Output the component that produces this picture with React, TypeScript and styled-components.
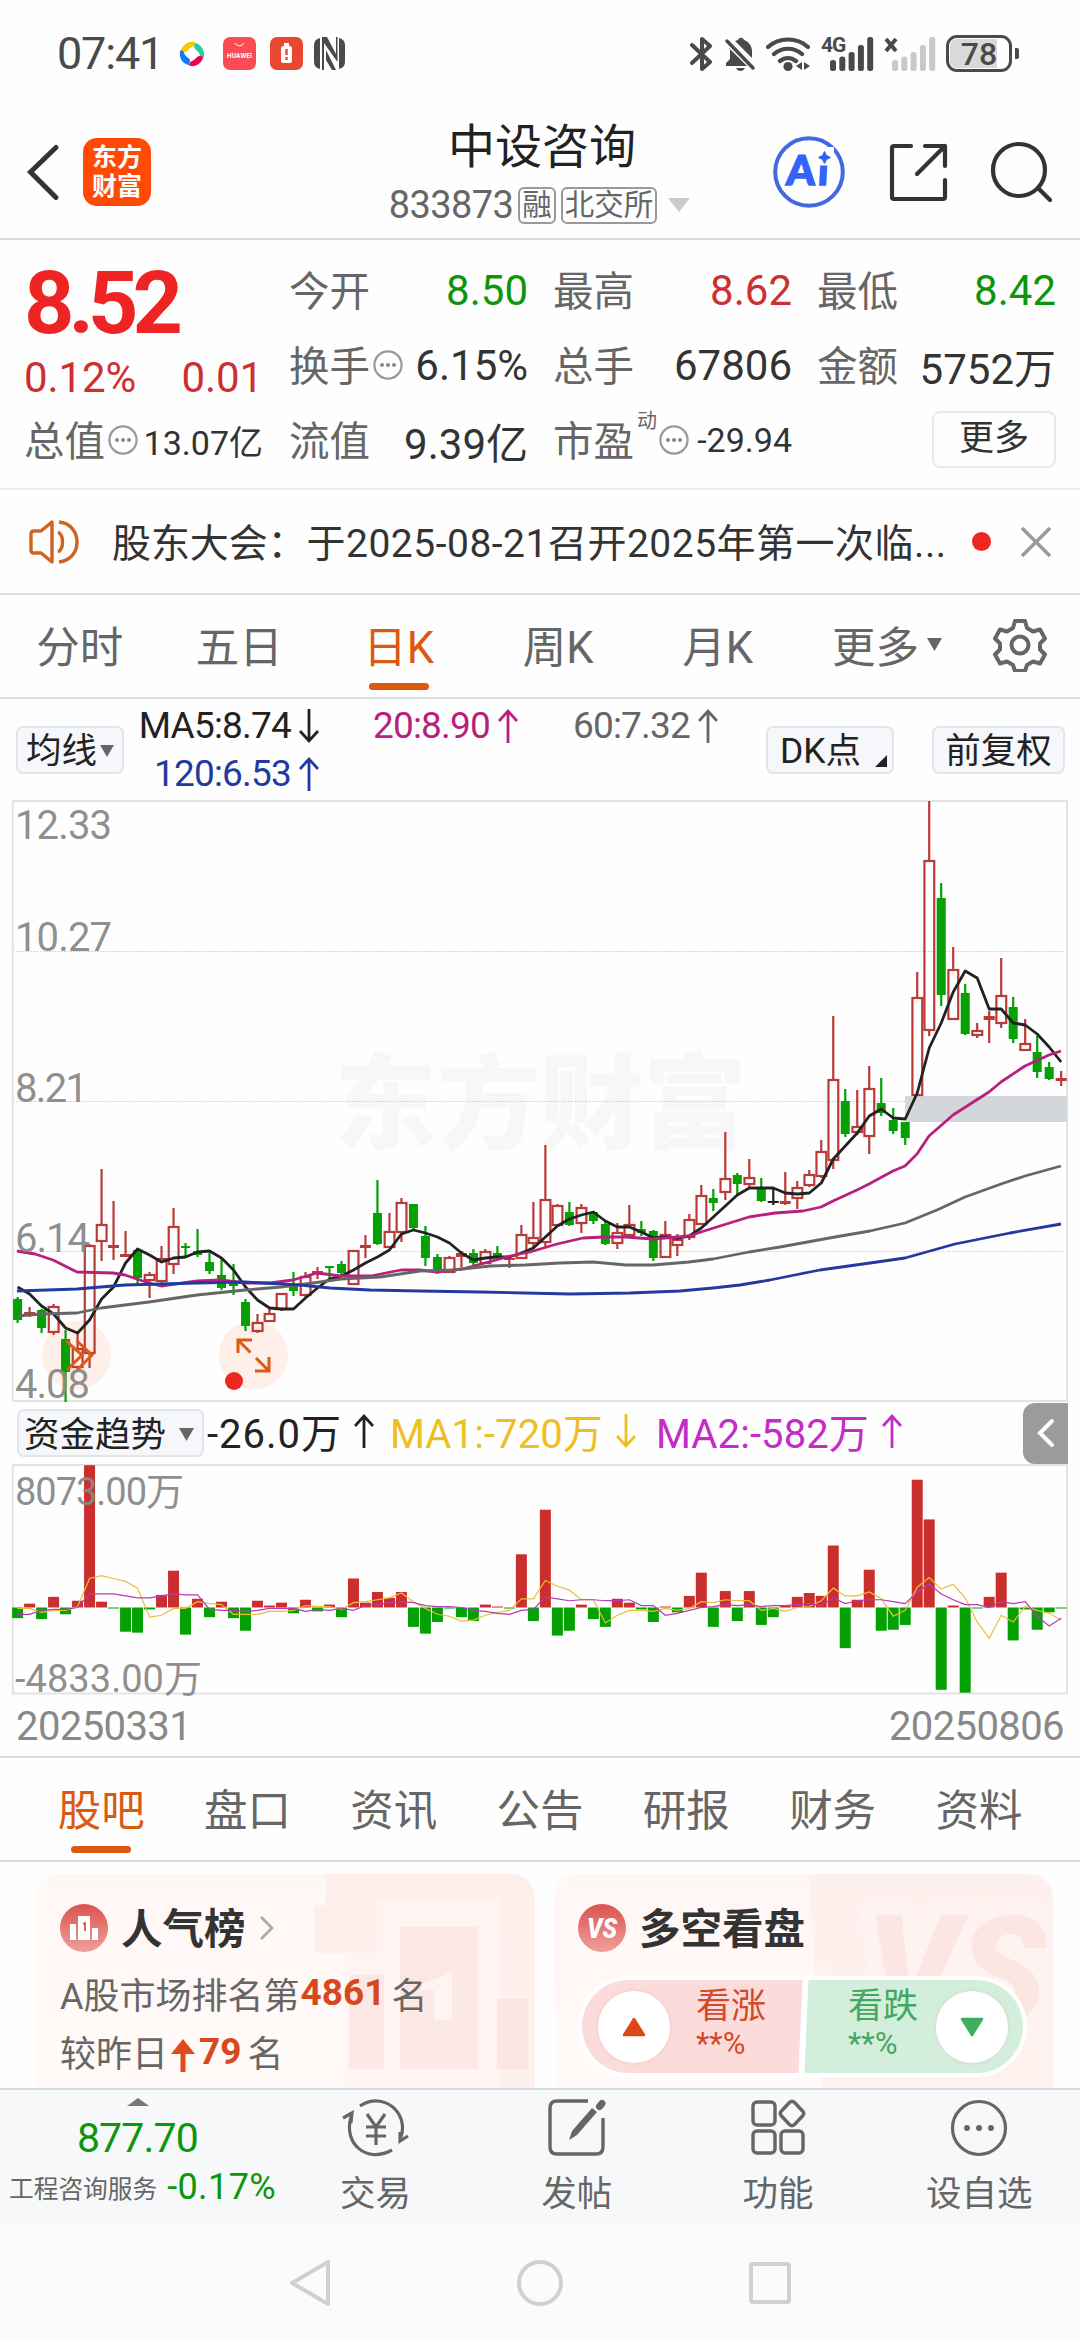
import React from 'react';
import styled, { createGlobalStyle } from 'styled-components';

type Candle = [string, number, number, number, number];

// kind (r = up, g = down, k = flat), high, body top, body bottom, low
const CANDLES: Candle[] = [
  ['g', 1297, 1299, 1320, 1323], ['r', 1307, 1312, 1315, 1317], ['g', 1309, 1310, 1328, 1333], ['r', 1304, 1306, 1332, 1335],
  ['g', 1330, 1339, 1372, 1402], ['r', 1333, 1348, 1367, 1370], ['r', 1244, 1245, 1353, 1368], ['r', 1169, 1224, 1241, 1261],
  ['r', 1201, 1245, 1248, 1260], ['r', 1231, 1254, 1257, 1257], ['g', 1250, 1250, 1278, 1285], ['r', 1272, 1274, 1280, 1298],
  ['r', 1246, 1258, 1281, 1285], ['r', 1208, 1226, 1264, 1274], ['g', 1243, 1246, 1248, 1256], ['g', 1229, 1251, 1255, 1257],
  ['g', 1253, 1262, 1271, 1274], ['g', 1259, 1275, 1288, 1290], ['g', 1264, 1283, 1286, 1295], ['g', 1299, 1302, 1326, 1331],
  ['r', 1314, 1322, 1331, 1333], ['r', 1308, 1313, 1321, 1322], ['r', 1293, 1293, 1309, 1311], ['g', 1272, 1286, 1291, 1296],
  ['r', 1272, 1276, 1295, 1298], ['r', 1267, 1271, 1274, 1279], ['g', 1266, 1266, 1268, 1279], ['g', 1261, 1264, 1273, 1275],
  ['r', 1250, 1250, 1284, 1285], ['r', 1235, 1245, 1248, 1258], ['g', 1180, 1213, 1244, 1245], ['r', 1213, 1231, 1247, 1248],
  ['r', 1198, 1202, 1232, 1242], ['g', 1204, 1204, 1228, 1229], ['g', 1226, 1236, 1258, 1266], ['g', 1254, 1257, 1269, 1274],
  ['r', 1256, 1257, 1272, 1273], ['r', 1251, 1253, 1257, 1267], ['g', 1249, 1253, 1263, 1265], ['r', 1249, 1251, 1263, 1264],
  ['g', 1246, 1253, 1258, 1260], ['r', 1257, 1258, 1260, 1268], ['r', 1225, 1234, 1258, 1259], ['r', 1202, 1237, 1243, 1247],
  ['r', 1145, 1199, 1242, 1247], ['r', 1204, 1205, 1225, 1227], ['g', 1202, 1212, 1225, 1226], ['r', 1204, 1207, 1223, 1233],
  ['g', 1211, 1212, 1221, 1224], ['g', 1222, 1224, 1244, 1245], ['r', 1223, 1232, 1243, 1249], ['r', 1205, 1224, 1235, 1238],
  ['g', 1221, 1229, 1233, 1236], ['g', 1230, 1231, 1258, 1261], ['r', 1221, 1234, 1257, 1258], ['r', 1234, 1239, 1245, 1256],
  ['r', 1214, 1219, 1237, 1240], ['r', 1185, 1195, 1224, 1225], ['g', 1189, 1198, 1203, 1211], ['r', 1132, 1178, 1192, 1200],
  ['g', 1173, 1175, 1184, 1195], ['r', 1159, 1177, 1184, 1187], ['g', 1178, 1187, 1201, 1202], ['k', 1188, 1201, 1203, 1205],
  ['r', 1172, 1201, 1204, 1205], ['r', 1181, 1187, 1198, 1209], ['r', 1170, 1174, 1185, 1187], ['r', 1140, 1151, 1176, 1178],
  ['r', 1016, 1079, 1160, 1169], ['g', 1089, 1101, 1134, 1137], ['r', 1090, 1126, 1132, 1135], ['r', 1066, 1088, 1136, 1154],
  ['g', 1078, 1103, 1113, 1116], ['g', 1108, 1120, 1131, 1134], ['g', 1122, 1122, 1138, 1145], ['r', 972, 997, 1095, 1096],
  ['r', 801, 860, 1030, 1036], ['g', 883, 898, 995, 1006], ['r', 947, 969, 1019, 1019], ['g', 984, 993, 1034, 1035],
  ['r', 1023, 1030, 1035, 1038], ['r', 1011, 1016, 1020, 1043], ['r', 958, 995, 1023, 1028], ['g', 997, 1007, 1039, 1043],
  ['r', 1019, 1043, 1050, 1051], ['g', 1036, 1052, 1072, 1078], ['g', 1062, 1067, 1079, 1080], ['r', 1071, 1078, 1081, 1086],
];

const MA5 = [
  1287, 1294, 1306, 1314, 1328, 1333, 1320, 1299, 1287, 1263, 1249, 1255, 1262, 1258, 1257, 1252, 1251, 1258, 1270, 1287,
  1300, 1308, 1309, 1309, 1298, 1288, 1279, 1276, 1270, 1263, 1257, 1250, 1234, 1230, 1233, 1237, 1243, 1253, 1260, 1258,
  1257, 1257, 1253, 1248, 1237, 1226, 1219, 1215, 1212, 1221, 1227, 1227, 1232, 1238, 1237, 1238, 1236, 1228, 1217, 1206,
  1195, 1188, 1188, 1188, 1193, 1194, 1193, 1183, 1159, 1146, 1133, 1116, 1109, 1118, 1119, 1093, 1048, 1023, 992, 971,
  978, 1009, 1009, 1023, 1025, 1034, 1047, 1062,
];

const MA20 = '17,1251 35,1254 53,1260 77,1272 113,1273 125,1275 149,1283 161,1286 197,1281 221,1280 245,1283 270,1283 293,1280 317,1273 341,1276 371,1276 401,1270 420,1270 437,1272 462,1269 485,1263 510,1256 530,1252 557,1244 583,1238 605,1237 625,1237 653,1239 689,1236 701,1232 720,1226 749,1217 775,1213 803,1211 821,1207 833,1201 857,1190 869,1184 893,1171 905,1166 917,1154 929,1136 953,1115 989,1092 1001,1082 1025,1066 1049,1055 1061,1051';
const MA60 = '17,1316 41,1314 77,1313 101,1308 149,1302 197,1295 245,1290 281,1287 313,1283 341,1279 380,1277 420,1271 453,1270 490,1266 525,1265 560,1263 593,1262 626,1265 653,1265 689,1262 713,1259 749,1252 780,1247 835,1237 870,1231 905,1223 937,1210 965,1197 1001,1184 1025,1176 1061,1166';
const MA120 = '17,1291 77,1289 125,1285 197,1283 245,1282 300,1285 330,1288 370,1290 420,1291 480,1292 525,1293 570,1294 630,1293 680,1291 713,1288 740,1285 770,1280 820,1270 870,1263 905,1258 955,1244 1010,1233 1061,1224';

const FLOW = [
  -11, 4, -12, 11, -7, 7, 147, 6, -1, -25, -26, -2, 13, 38, -28, 9, -10, 6, -11, -24, 7, 2, 5, -6, 8, -4, 3, -10, 30, 5,
  16, 10, 16, -20, -27, -15, -1, -10, -14, 3, 1, -1, 55, -14, 101, -29, -24, 3, -12, -20, 9, 5, -2, -15, 1, -5, 12, 36,
  -20, 17, -14, 17, -18, -10, 2, 11, 15, 12, 64, -42, 8, 39, -24, -23, -18, 132, 91, -85, 2, -88, -1, 11, 36, -34, -2,
  -23, -5, -1,
];
const FLOW_MA1 = [
  -1, -1, -5, -3, -3, 1, 30, 33, 30, 27, 20, -10, -8, -1, -1, 6, 4, 3, -7, -7, -7, -4, -4, -3, 2, 1, 1, -2, 5, 6, 8, 10,
  15, 6, -1, -7, -9, -14, -13, -8, -5, -3, 9, 9, 28, 22, 18, 8, 8, -16, -8, -3, -3, -4, -1, -3, -1, 6, 5, 8, 7, 7, -3, -1,
  -4, 0, 1, 7, 20, 12, 12, 16, 9, -9, -3, 21, 31, 19, 24, 10, -15, -32, -8, -15, 1, -3, -6, -13,
];
const FLOW_MA2 = [
  -7, -7, -3, -2, -2, 0, 14, 14, 14, 12, 10, 10, 12, 14, 13, 13, -2, -3, -3, -4, -3, -1, -1, -1, -4, -2, -3, -1, -3, 2, 3,
  5, 6, 5, 2, 1, 1, 0, -3, -4, -6, -7, -3, -2, 11, 9, 7, 8, 8, 7, 7, 8, 2, 2, -8, -6, -3, 0, 1, 3, 2, 3, 1, 2, 2, 3, 4, 2,
  10, 4, 7, 8, 8, 6, 4, 16, 24, 14, 8, 3, 3, 0, 6, 4, 6, -9, -19, -11,
];

const FLOW_ZERO = 1607.5;
const FLOW_SCALE = 0.968;
const COLORS: Record<string, string> = { r: '#b93a37', g: '#04a004', k: '#222' };

const cx = (i: number) => 17.6 + i * 11.995;
const flowLine = (values: number[]) => values.map((v, i) => `${cx(i)},${FLOW_ZERO - v * FLOW_SCALE}`).join(' ');

const Arrow = ({ up }: { up?: boolean }) => (
  <ArrowSvg width="20" height="36" viewBox="0 0 20 36" fill="none" stroke="currentColor" strokeWidth="2.8">
    {up ? <path d="M10 35V3M1 13l9-10 9 10" /> : <path d="M10 1v32M1 23l9 10 9-10" />}
  </ArrowSvg>
);

const Info = () => (
  <svg width="30" height="30" viewBox="0 0 30 30">
    <circle cx="15" cy="15" r="13.6" fill="none" stroke="#999" strokeWidth="2.2" />
    <circle cx="9" cy="15" r="2" fill="#888" />
    <circle cx="15" cy="15" r="2" fill="#888" />
    <circle cx="21" cy="15" r="2" fill="#888" />
  </svg>
);

const Swirl = () => (
  <svg width="26" height="26" viewBox="0 0 26 26">
    <path d="M2 9C5 3 9 0 16 1c1 2-1 4-3 5-3 1-4 5-7 5C4 12 2 11 2 9z" fill="#fdc800" />
    <path d="M17 2c5 2 9 7 8 14-3 2-4-1-5-4-1-2-5-4-5-7 0-1 1-3 2-3z" fill="#25cf9f" />
    <path d="M24 17c-2 5-6 9-13 8-2-1 0-4 2-5 3-1 4-4 7-5 2 0 4 0 4 2z" fill="#f2004f" />
    <path d="M9 24C3 22 0 17 1 10c2-2 4 1 5 4 1 2 5 3 5 6 0 2-1 4-2 4z" fill="#0d7df5" />
  </svg>
);

const SignalBars = ({ color }: { color: string }) => (
  <svg width="44" height="34" viewBox="0 0 44 34" fill={color}>
    <rect x="0" y="23" width="6" height="11" rx="2.5" />
    <rect x="9.3" y="19.5" width="6" height="14.5" rx="2.5" />
    <rect x="18.6" y="15" width="6" height="19" rx="2.5" />
    <rect x="27.9" y="8" width="6" height="26" rx="2.5" />
    <rect x="37.2" y="0" width="6" height="34" rx="2.5" />
  </svg>
);

const KChart = () => (
  <ChartSvg width="1080" height="602" viewBox="0 800 1080 602">
    <text x="334" y="1141" fontSize="103" fontWeight="900" fill="#f7f7f7">东方财富</text>
    <g stroke="#ccc" strokeWidth="1" strokeDasharray="1.5 1.5">
      <path d="M13 951.5H1066M13 1101.5H1066M13 1251.5H1066" />
    </g>
    <rect x="12.7" y="801" width="1054.3" height="600" fill="none" stroke="#e3e3e3" strokeWidth="2" />
    <rect x="905" y="1096" width="162" height="26" fill="#d3d6db" />
    <circle cx="76.5" cy="1355" r="34.5" fill="#feefe8" />
    <circle cx="253.5" cy="1355" r="34.5" fill="#feefe8" />
    {CANDLES.map(([kind, high, top, bottom, low], i) => {
      const color = COLORS[kind];
      const x = cx(i);
      const hollow = kind === 'r' && bottom - top > 4;
      return (
        <g key={i} stroke={color} strokeWidth="2.2" fill={color}>
          <path d={`M${x} ${high}V${top}M${x} ${bottom}V${low}`} />
          {hollow ? (
            <rect x={x - 4.8} y={top + 1} width="9.8" height={bottom - top - 1} fill="none" />
          ) : (
            <rect x={x - (kind === 'g' ? 4.5 : 5.5)} y={top} width={kind === 'g' ? 9 : 11} height={Math.max(bottom - top, 2)} stroke="none" />
          )}
        </g>
      );
    })}
    <g fill="none" strokeWidth="2.8" strokeLinejoin="round">
      <polyline points={MA5.map((y, i) => `${cx(i)},${y}`).join(' ')} stroke="#222" />
      <polyline points={MA20} stroke="#b91f7c" />
      <polyline points={MA60} stroke="#666" />
      <polyline points={MA120} stroke="#2339a0" />
    </g>
    <g fill="none" stroke="#d95b15" strokeWidth="3">
      <path d="M66 1341l16 14-15 15M77 1341l15 14-15 15" />
      <path d="M238 1353v-13h14M238 1340l12.5 12.5M255 1371h14v-14M269 1371l-13-13" />
    </g>
    <circle cx="234" cy="1381" r="9" fill="#ee2722" />
    <g fontSize="40" fill="#888" fillOpacity="0.95">
      <text x="15" y="839" textLength="97">12.33</text>
      <text x="15" y="951" textLength="97">10.27</text>
      <text x="15" y="1102" textLength="73">8.21</text>
      <text x="15" y="1252" textLength="75">6.14</text>
      <text x="15" y="1398" textLength="75">4.08</text>
    </g>
  </ChartSvg>
);

const FlowChart = () => (
  <ChartSvg width="1080" height="231" viewBox="0 1464 1080 231">
    <rect x="12.7" y="1465" width="1054.3" height="228.5" fill="none" stroke="#e3e3e3" strokeWidth="2" />
    {FLOW.map((v, i) => {
      const h = Math.max(Math.abs(v) * FLOW_SCALE, 1);
      return <rect key={i} x={cx(i) - 5.5} y={v > 0 ? FLOW_ZERO - h : FLOW_ZERO} width="11" height={h} fill={v > 0 ? '#cb2f2d' : '#04a004'} />;
    })}
    <polyline points={flowLine(FLOW_MA1)} fill="none" stroke="#e9bd3a" strokeWidth="1.2" />
    <polyline points={flowLine(FLOW_MA2)} fill="none" stroke="#b73ab7" strokeWidth="1.2" />
    <g fontSize="38" fill="#888" fillOpacity="0.95">
      <text x="15" y="1505" textLength="169">8073.00万</text>
      <text x="15" y="1692" textLength="187">-4833.00万</text>
    </g>
  </ChartSvg>
);

const PERIODS = ['分时', '五日', '日K', '周K', '月K'];
const SECTIONS = ['股吧', '盘口', '资讯', '公告', '研报', '财务', '资料'];

export default function App() {
  return (
    <Page>
      <GlobalStyle />
      <StatusBar>
        <Clock>07:41</Clock>
        <Spot $left={20}><Swirl /></Spot>
        <Spot $left={18}>
          <svg width="33" height="33" viewBox="0 0 33 33">
            <rect width="33" height="33" rx="7" fill="#fb4b55" />
            <path d="M12 6a5 5 0 0 0 9 0" fill="none" stroke="#fff" />
            <text x="4" y="21" fontSize="6.5" fontWeight="700" fill="#fff" textLength="25">HUAWEI</text>
          </svg>
        </Spot>
        <Spot $left={14}>
          <svg width="33" height="33" viewBox="0 0 33 33">
            <rect width="33" height="33" rx="7" fill="#e8482f" />
            <rect x="11" y="9" width="11" height="17" rx="2.5" fill="#fff" />
            <rect x="14" y="6" width="5" height="3" fill="#fff" />
            <path d="M16.5 12v6M16.500 20v3" stroke="#e8482f" strokeWidth="2.4" />
          </svg>
        </Spot>
        <Spot $left={11}>
          <svg width="31" height="33" viewBox="0 0 31 33" fill="#4a4a4a">
            <path d="M6 1C2 2 0 4 0 9v15c0 5 2 7 6 8zM25 1c4 1 6 3 6 8v15c0 5-2 7-6 8z" />
            <path d="M8 0h5l9 17V0h1.500v25L10 6v27H8zM12 13l10 20h-4l-6-10z" />
          </svg>
        </Spot>
        <Spacer />
        <svg width="24" height="36" viewBox="0 0 24 36" fill="none" stroke="#4a4a4a" strokeWidth="4" strokeLinejoin="round" strokeLinecap="round">
          <path d="M2 9l18 17-8 7V3l8 7L2 27" />
        </svg>
        <Spot $left={10}>
          <svg width="32" height="36" viewBox="0 0 32 36">
            <path d="M11 5l3-1c1-3 5-3 6 0 5 2 8 6 8 11v7zM5 12l18 18H2v-3l4-4V12zM12 32h9c-2 4-7 4-9 0z" fill="#4a4a4a" />
            <path d="M3 5l26 27" stroke="#4a4a4a" strokeWidth="3.5" strokeLinecap="round" />
          </svg>
        </Spot>
        <Spot $left={10}>
          <svg width="44" height="36" viewBox="0 0 44 36" fill="none" stroke="#4a4a4a" strokeWidth="4.2" strokeLinecap="round">
            <path d="M2 11c11-10 29-10 40 0M8 18c8-7 20-7 28 0M14 25c5-4 11-4 16 0" />
            <circle cx="22" cy="30.5" r="4.6" fill="#4a4a4a" stroke="none" />
            <path d="M36 26v8l-6-4zM38 26v8l6-4z" fill="#4a4a4a" stroke="none" />
          </svg>
        </Spot>
        <Signal $left={20}>
          <SignalTag>4G</SignalTag>
          <SignalBars color="#4a4a4a" />
        </Signal>
        <Signal $left={18}>
          <SignalCross width="14" height="16" viewBox="0 0 14 16"><path d="M2 2l10 12M12 2L2 14" stroke="#4a4a4a" strokeWidth="4" /></SignalCross>
          <SignalBars color="#c9c9c9" />
        </Signal>
        <Battery><BatteryFill />78</Battery>
        <BatteryTip />
      </StatusBar>

      <Header>
        <svg width="36" height="60" viewBox="0 0 36 60" fill="none" stroke="#333" strokeWidth="5" strokeLinecap="round">
          <path d="M31 5.5L5.500 30 31 55.500" />
        </svg>
        <Logo><span>东方</span><span>财富</span></Logo>
        <TitleBlock>
          <Title>中设咨询</Title>
          <SubTitle>
            <Code>833873</Code>
            <Tag>融</Tag>
            <Tag>北交所</Tag>
            <svg width="22" height="14" viewBox="0 0 22 14"><path d="M0 0h22L11 14z" fill="#ccc" /></svg>
          </SubTitle>
        </TitleBlock>
        <HeaderIcons>
          <svg width="74" height="74" viewBox="0 0 74 74">
            <circle cx="37" cy="37" r="33.8" fill="none" stroke="#4169e1" strokeWidth="4" />
            <text x="13.5" y="50" fontSize="41" fontWeight="900" fill="#3563f8" stroke="#3563f8" strokeWidth="1.4" fontFamily="Lato" transform="skewX(-3) translate(3 0)" textLength="42">Ai</text>
            <path d="M44 12h18v18.5H44z" fill="#fff" />
            <path d="M52.5 16.500l2 4 4 2-4 2-2 4-2-4-4-2 4-2z" fill="#3563f8" stroke="#3563f8" strokeLinejoin="round" />
          </svg>
          <svg width="60" height="60" viewBox="0 0 60 60" fill="none" stroke="#333" strokeWidth="4.2" strokeLinecap="round" strokeLinejoin="round">
            <path d="M23 4H6q-2 0-2 2v49q0 2 2 2h49q2 0 2-2V38M37 4h20v20M57 4L29 32" />
          </svg>
          <svg width="62" height="62" viewBox="0 0 62 62" fill="none" stroke="#333" strokeWidth="4.2" strokeLinecap="round">
            <circle cx="29" cy="29" r="26" />
            <path d="M49 48l11 11" />
          </svg>
        </HeaderIcons>
      </Header>

      <Quote>
        <PriceBlock>
          <Price>8.52</Price>
          <Change><span>0.12%</span><span>0.01</span></Change>
          <Cell><Label>总值</Label><Info /><Value $small>13.07亿</Value></Cell>
        </PriceBlock>
        <QuoteGrid>
          <Cell><Label>今开</Label><Value $color="#0c960c">8.50</Value></Cell>
          <Cell><Label>最高</Label><Value $color="#cc3030">8.62</Value></Cell>
          <Cell><Label>最低</Label><Value $color="#0c960c">8.42</Value></Cell>
          <Cell><Label>换手</Label><Info /><Value>6.15%</Value></Cell>
          <Cell><Label>总手</Label><Value>67806</Value></Cell>
          <Cell><Label>金额</Label><Value>5752万</Value></Cell>
          <Cell><Label>流值</Label><Value>9.39亿</Value></Cell>
          <Cell><Label>市盈</Label><Sup>动</Sup><Info /><Value $small>-29.94</Value></Cell>
          <MoreCell><MoreButton>更多</MoreButton></MoreCell>
        </QuoteGrid>
      </Quote>

      <Notice>
        <svg width="52" height="44" viewBox="0 0 52 44" fill="none" stroke="#d0631f" strokeWidth="3.4" strokeLinejoin="round">
          <path d="M23 2v40L12 33H5q-3 0-3-3V14q0-3 3-3h7zM29 12c6 3 6 17 0 20M30 2c24 2 24 38 0 40" />
        </svg>
        <NoticeText>股东大会：<span>于2025-08-21召开2025年第一次临...</span></NoticeText>
        <Dot />
        <svg width="30" height="30" viewBox="0 0 30 30" stroke="#999" strokeWidth="3.4"><path d="M1 1l28 28M29 1L1 29" /></svg>
      </Notice>

      <Periods>
        {PERIODS.map((name) => <Tab key={name} $width={159.5} $active={name === '日K'}>{name}</Tab>)}
        <Tab $width={161}>
          更多<Caret width="15" height="13" viewBox="0 0 15 13"><path d="M0 0h15L7.5 13z" fill="#666" /></Caret>
        </Tab>
        <Gear width="54" height="54" viewBox="0 0 54 54" fill="none" stroke="#666" strokeWidth="4" strokeLinejoin="round">
          <path d="M22 3h10l2 7 6 3.5 7-2 5 9-5 5v6l5 5-5 9-7-2-6 3.500-2 6H22l-2-6-6-3.500-7 2-5-9 5-5v-6l-5-5 5-9 7 2 6-3.500z" />
          <circle cx="27" cy="27" r="8.5" />
        </Gear>
      </Periods>

      <Averages>
        <Chip $width={108} $pad={8}>均线<Caret width="14" height="12" viewBox="0 0 15 13"><path d="M0 0h15L7.5 13z" fill="#666" /></Caret></Chip>
        <AverageGrid>
          <Average $color="#222">MA5:8.74<Arrow /></Average>
          <Average $color="#b91f7c">20:8.90<Arrow up /></Average>
          <Average $color="#666">60:7.32<Arrow up /></Average>
          <Average $color="#2339a0">120:6.53<Arrow up /></Average>
        </AverageGrid>
        <Chip $width={128} $left={48} $pad={12} $align="flex-start">
          DK点
          <Corner width="12" height="12" viewBox="0 0 12 12"><path d="M12 0v12H0z" fill="#222" /></Corner>
        </Chip>
        <Chip $width={133} $left={38} $pad={8}>前复权</Chip>
      </Averages>

      <KChart />

      <FlowHead>
        <Chip $width={187} $left={17} $pad={5} $align="space-between">资金趋势<Caret width="15" height="13" viewBox="0 0 15 13"><path d="M0 0h15L7.5 13z" fill="#666" /></Caret></Chip>
        <FlowValue $width={167} $left={3} $color="#222" $wide>-26.0万<Arrow up /></FlowValue>
        <FlowValue $width={246} $left={16} $color="#eec01f">MA1:-720万<Arrow /></FlowValue>
        <FlowValue $width={246} $left={20} $color="#c42cc8">MA2:-582万<Arrow up /></FlowValue>
        <Collapse>
          <svg width="18" height="30" viewBox="0 0 18 30" fill="none" stroke="#fff" strokeWidth="4" strokeLinecap="round"><path d="M15 3L3 15l12 12" /></svg>
        </Collapse>
      </FlowHead>

      <FlowChart />
      <Dates><span>20250331</span><span>20250806</span></Dates>

      <Sections>
        {SECTIONS.map((name) => <Tab key={name} $width={146.3} $active={name === '股吧'}>{name}</Tab>)}
      </Sections>

      <Cards>
        <Card>
          <CardArt width="499" height="214" viewBox="36 1874 499 214">
            <path d="M325 1874h210v214H345v-135h-30v-47h10z" fill="#fde5e1" opacity="0.45" />
            <path d="M377 1898h124v190H345v-135h32z" fill="#fff6f3" opacity="0.7" />
            <path d="M400 1927h78v142h-78zM349 1975h35v94h-35zM497 1999h31v70h-31z" fill="#fadfdb" opacity="0.6" />
            <path d="M422 1984l30-12v48h-18v-30h-12z" fill="#fff4f1" />
          </CardArt>
          <CardTitle>
            <svg width="48" height="48" viewBox="0 0 48 48">
              <defs>
                <linearGradient id="badge" x1="0" y1="0" x2="0" y2="1"><stop offset="0" stopColor="#d9534f" /><stop offset="1" stopColor="#f0a09b" /></linearGradient>
              </defs>
              <circle cx="24" cy="24" r="24" fill="url(#badge)" />
              <path d="M10 20h6v16h-6zM18 12h12v24H18zM32 24h6v12h-6z" fill="#fff" />
              <path d="M23 20l2-1v8" fill="none" stroke="#d9534f" strokeWidth="1.8" />
            </svg>
            <span>人气榜</span>
            <Chevron width="14" height="24" viewBox="0 0 14 24" fill="none" stroke="#aaa" strokeWidth="2.6"><path d="M1 1l11 11L1 23" /></Chevron>
          </CardTitle>
          <CardLine>A股市场排名第<Strong>4861</Strong>名</CardLine>
          <CardLine>
            较昨日
            <svg width="26" height="34" viewBox="0 0 26 34"><path d="M13 1l12 15H1z" fill="#e04a1c" /><path d="M13 14v20" stroke="#e04a1c" strokeWidth="5" /></svg>
            <Strong>79</Strong>名
          </CardLine>
        </Card>
        <Card>
          <CardArt width="499" height="214" viewBox="554 1874 499 214">
            <path d="M809 1874h244v214H822z" fill="#fde5e1" opacity="0.4" />
            <text x="866" y="2022" fontFamily="Roboto" fontSize="150" fontWeight="900" fontStyle="italic" fill="#fadfdb" stroke="#fff6f3" strokeWidth="32" strokeLinejoin="round" paintOrder="stroke" opacity="0.6" textLength="180" lengthAdjust="spacingAndGlyphs">VS</text>
          </CardArt>
          <CardTitle>
            <svg width="48" height="48" viewBox="0 0 48 48">
              <circle cx="24" cy="24" r="24" fill="url(#badge)" />
              <text x="9" y="34" fontFamily="Roboto" fontSize="28" fontWeight="900" fontStyle="italic" fill="#fff" textLength="30" lengthAdjust="spacingAndGlyphs">VS</text>
            </svg>
            <span>多空看盘</span>
          </CardTitle>
          <Vote>
            <VoteSide $color="#d4492a" $bg="#fbdcda">
              <Knob><svg width="24" height="20" viewBox="0 0 24 20"><path d="M12 2l10 16H2z" fill="#de4718" stroke="#de4718" strokeWidth="2.5" strokeLinejoin="round" /></svg></Knob>
              <VoteText>看涨<small>**%</small></VoteText>
            </VoteSide>
            <VoteSide $color="#42a862" $bg="#d4eedc" $right>
              <VoteText>看跌<small>**%</small></VoteText>
              <Knob><svg width="24" height="20" viewBox="0 0 24 20"><path d="M12 18L2 2h20z" fill="#3eae62" stroke="#3eae62" strokeWidth="2.5" strokeLinejoin="round" /></svg></Knob>
            </VoteSide>
          </Vote>
        </Card>
      </Cards>

      <ActionBar>
        <Index>
          <svg width="22" height="8" viewBox="0 0 22 8"><path d="M11 0l11 8H0z" fill="#777" /></svg>
          <IndexValue>877.70</IndexValue>
          <IndexName>工程咨询服务<span>-0.17%</span></IndexName>
        </Index>
        <Action>
          <svg width="68" height="62" viewBox="0 0 68 62" fill="none" stroke="#666" strokeWidth="3.2">
            <path d="M18 9c23-15 49 6 41 31M50 53C25 67 1 47 9 20M1 21l9-5-1 10M58 35l0 9 8-5" />
            <path d="M25 17l9 13 9-13M34 30v18M24 30h20M24 39h20" />
          </svg>
          交易
        </Action>
        <Action>
          <svg width="60" height="62" viewBox="0 0 60 62" fill="none" stroke="#666" strokeWidth="3.4">
            <path d="M41 4H10q-7 0-7 7v39q0 7 7 7h39q7 0 7-7V21" />
            <path d="M52.5 9.500l2.500-3" strokeWidth="7" strokeLinecap="round" />
            <path d="M45 11l5 4-20 23-8 5 3-9z" fill="#666" stroke="none" />
          </svg>
          发帖
        </Action>
        <Action>
          <svg width="56" height="62" viewBox="0 0 56 62" fill="none" stroke="#666" strokeWidth="3.4">
            <rect x="3" y="5" width="22" height="23" rx="4" />
            <rect x="3" y="34" width="22" height="22" rx="4" />
            <rect x="31" y="34" width="22" height="22" rx="4" />
            <path d="M39.5 5.500q2.500-2.500 5 0l8 8.500q2.500 2.500 0 5l-8 8.500q-2.500 2.500-5 0l-8-8.500q-2.500-2.500 0-5z" />
          </svg>
          功能
        </Action>
        <Action>
          <svg width="60" height="62" viewBox="0 0 60 62">
            <circle cx="30" cy="31" r="26.5" fill="none" stroke="#666" strokeWidth="3.2" />
            <circle cx="18" cy="31" r="3" fill="#666" /><circle cx="30" cy="31" r="3" fill="#666" /><circle cx="42" cy="31" r="3" fill="#666" />
          </svg>
          设自选
        </Action>
      </ActionBar>

      <SystemNav>
        <svg width="42" height="48" viewBox="0 0 42 48" fill="none" stroke="#d0d0d0" strokeWidth="4" strokeLinejoin="round"><path d="M39 3v42L3 24z" /></svg>
        <svg width="48" height="48" viewBox="0 0 48 48" fill="none" stroke="#d0d0d0" strokeWidth="4"><circle cx="24" cy="24" r="21" /></svg>
        <svg width="42" height="48" viewBox="0 0 42 48" fill="none" stroke="#d0d0d0" strokeWidth="4"><rect x="2" y="5" width="38" height="38" rx="2" /></svg>
      </SystemNav>
    </Page>
  );
}

/* ----- STYLES ----- */

const GlobalStyle = createGlobalStyle`
  body {
    margin: 0;
    background: #fff;
  }
  * {
    box-sizing: border-box;
  }
  svg {
    display: block;
    flex: none;
  }
`;

const Page = styled.div`
  width: 1080px;
  height: 2340px;
  overflow: hidden;
  display: flex;
  flex-direction: column;
  background: #fefefe;
  font-family: Roboto, 'Noto Sans CJK SC', sans-serif;
  color: #222;
  white-space: nowrap;
`;

const StatusBar = styled.div`
  height: 107px;
  flex: none;
  display: flex;
  align-items: center;
  padding: 0 65px 0 57px;
`;

const Clock = styled.div`
  width: 102px;
  font-size: 45px;
  letter-spacing: -1.2px;
  color: #4a4a4a;
`;

const Spot = styled.div<{ $left: number }>`
  margin-left: ${(p) => p.$left}px;
`;

const Spacer = styled.div`
  flex: 1;
`;

const Signal = styled.div<{ $left: number }>`
  position: relative;
  margin-left: ${(p) => p.$left}px;
`;

const SignalTag = styled.span`
  position: absolute;
  left: -9px;
  top: -3px;
  font-size: 21px;
  line-height: 22px;
  font-weight: 700;
  letter-spacing: -1px;
  color: #4a4a4a;
`;

const SignalCross = styled.svg`
  position: absolute;
  left: -8px;
  top: 0;
`;

const Battery = styled.div`
  position: relative;
  width: 66px;
  height: 37px;
  margin-left: 10px;
  border: 3px solid #4a4a4a;
  border-radius: 11px;
  font-size: 32px;
  font-weight: 500;
  line-height: 32px;
  text-align: center;
  color: #4a4a4a;
  z-index: 0;
`;

const BatteryFill = styled.div`
  position: absolute;
  z-index: -1;
  left: 1px;
  top: 1px;
  bottom: 1px;
  width: 47px;
  border-radius: 7px 0 0 7px;
  background: #d9d9d9;
`;

const BatteryTip = styled.div`
  width: 4px;
  height: 11px;
  margin: 0 -4px 0 3px;
  border-radius: 0 2px 2px 0;
  background: #4a4a4a;
`;

const Header = styled.div`
  height: 133px;
  flex: none;
  display: flex;
  align-items: center;
  padding: 0 28px 2px 25px;
  border-bottom: 2px solid #dcdcdc;
`;

const Logo = styled.div`
  width: 68px;
  height: 68px;
  margin-left: 22px;
  display: flex;
  flex-direction: column;
  justify-content: center;
  align-items: center;
  border-radius: 14px;
  background: #ff4a05;
  color: #fff;
  font-size: 25px;
  font-weight: 700;
  line-height: 29px;
`;

// the right padding is smaller than the left so the title sits on the screen centre
const TitleBlock = styled.div`
  flex: 1;
  display: flex;
  flex-direction: column;
  align-items: center;
  padding-left: 158px;
`;

const Title = styled.div`
  padding-left: 3px;
  font-size: 47px;
  line-height: 62px;
`;

const SubTitle = styled.div`
  display: flex;
  align-items: center;
  gap: 5px;
  height: 44px;
  margin-top: 5px;
  margin-right: 2px;
`;

const Code = styled.span`
  font-size: 38px;
  line-height: 44px;
  letter-spacing: -0.6px;
  color: #666;
`;

const Tag = styled.span`
  height: 37px;
  padding: 0 2px;
  border: 2px solid #999;
  border-radius: 6px;
  font-size: 29.5px;
  line-height: 32px;
  color: #666;

  & + svg {
    margin-left: 6px;
  }
`;

const HeaderIcons = styled.div`
  display: flex;
  align-items: center;
  gap: 42px;
`;

const Quote = styled.div`
  height: 250px;
  flex: none;
  display: flex;
  gap: 26px;
  padding: 12px 24px 0 24px;
  border-bottom: 2px solid #ececec;
`;

const PriceBlock = styled.div`
  width: 239px;
  display: flex;
  flex-direction: column;
`;

const Price = styled.div`
  height: 98px;
  font-size: 88px;
  font-weight: 700;
  line-height: 102px;
  letter-spacing: -6px;
  color: #ee2424;
`;

const Change = styled.div`
  display: flex;
  justify-content: space-between;
  height: 52px;
  font-size: 42px;
  line-height: 56px;
  letter-spacing: -0.1px;
  color: #cc3030;
`;

const QuoteGrid = styled.div`
  flex: 1;
  display: grid;
  grid-template-columns: repeat(3, 239px);
  grid-auto-rows: 75px;
  column-gap: 25px;
`;

const Cell = styled.div`
  display: flex;
  align-items: center;
  height: 75px;
`;

const Label = styled.span`
  margin-right: 3px;
  padding-bottom: 3px;
  font-size: 40.5px;
  color: #666;
`;

const Value = styled.span<{ $color?: string; $small?: boolean }>`
  margin-left: auto;
  padding-top: 1px;
  font-size: ${(p) => (p.$small ? 34 : 42)}px;
  color: ${(p) => p.$color || '#333'};
`;

const Sup = styled.span`
  align-self: flex-start;
  margin: 7px 2px 0 0;
  font-size: 20px;
  line-height: 24px;
  color: #666;
`;

const MoreCell = styled(Cell)`
  justify-content: flex-end;
`;

const MoreButton = styled.div`
  width: 124px;
  height: 57px;
  border: 2px solid #e8eaec;
  border-radius: 8px;
  font-size: 35px;
  line-height: 51px;
  text-align: center;
  color: #333;
`;

const Notice = styled.div`
  height: 105px;
  flex: none;
  display: flex;
  align-items: center;
  padding: 0 29px 0 29px;
  border-bottom: 2px solid #dcdcdc;
`;

const NoticeText = styled.div`
  flex: 1;
  margin-left: 31px;
  padding-bottom: 4px;
  font-size: 39px;
  letter-spacing: -0.1px;
  color: #333;

  span {
    letter-spacing: 0.5px;
  }
`;

const Dot = styled.div`
  width: 19px;
  height: 19px;
  margin-right: 30px;
  border-radius: 50%;
  background: #f02420;
`;

const Periods = styled.div`
  height: 104px;
  flex: none;
  display: flex;
  border-bottom: 2px solid #dcdcdc;
`;

const Tab = styled.div<{ $width: number; $active?: boolean }>`
  position: relative;
  width: ${(p) => p.$width}px;
  height: 102px;
  display: flex;
  align-items: center;
  justify-content: center;
  padding-bottom: 3px;
  font-size: 43.5px;
  color: ${(p) => (p.$active ? '#dc5a10' : '#666')};

  &::after {
    content: '';
    display: ${(p) => (p.$active ? 'block' : 'none')};
    position: absolute;
    left: calc(50% - 30px);
    bottom: 7px;
    width: 60px;
    height: 7px;
    border-radius: 4px;
    background: #dc5a10;
  }
`;

const Caret = styled.svg`
  margin: 0 -18px 0 8px;
`;

const Gear = styled.svg`
  margin: 23px 0 0 34px;
`;

const Averages = styled.div`
  height: 101px;
  flex: none;
  display: flex;
  align-items: center;
  padding-left: 16px;
`;

const Chip = styled.div<{ $width: number; $pad: number; $left?: number; $align?: string }>`
  position: relative;
  width: ${(p) => p.$width}px;
  height: 48px;
  margin-left: ${(p) => p.$left || 0}px;
  flex: none;
  display: flex;
  align-items: center;
  justify-content: ${(p) => p.$align || 'center'};
  padding: 0 8px 4px ${(p) => p.$pad}px;
  border: 2px solid #e2e5e9;
  border-radius: 7px;
  background: #f6f7fa;
  font-size: 35.5px;
  color: #222;

  ${Caret} {
    margin: 6px 0 0 3px;
  }
`;

const Corner = styled.svg`
  position: absolute;
  right: 5px;
  bottom: 5px;
`;

const AverageGrid = styled.div`
  display: grid;
  grid-template-columns: 195px 199px 200px;
  grid-auto-rows: 48px;
`;

const Average = styled.div<{ $color: string }>`
  display: flex;
  align-items: center;
  justify-content: flex-end;
  font-size: 37px;
  letter-spacing: -0.8px;
  color: ${(p) => p.$color};
`;

const ArrowSvg = styled.svg`
  margin-left: 8px;
`;

const ChartSvg = styled.svg`
  overflow: visible;
  font-family: Roboto, 'Noto Sans CJK SC', sans-serif;
`;

const FlowHead = styled.div`
  height: 62px;
  flex: none;
  display: flex;
  align-items: center;
`;

const FlowValue = styled.div<{ $width: number; $left: number; $color: string; $wide?: boolean }>`
  width: ${(p) => p.$width}px;
  margin-left: ${(p) => p.$left}px;
  display: flex;
  align-items: center;
  justify-content: space-between;
  padding-bottom: 4px;
  font-size: 40px;
  letter-spacing: ${(p) => (p.$wide ? 1 : 0.1)}px;
  color: ${(p) => p.$color};

  ${ArrowSvg} {
    margin-left: 4px;
  }
`;

const Collapse = styled.div`
  width: 45px;
  height: 61px;
  margin: 0 12px 0 auto;
  display: flex;
  align-items: center;
  justify-content: center;
  border-radius: 12px 0 0 12px;
  background: #9b9b9b;
`;

const Dates = styled.div`
  height: 63px;
  flex: none;
  display: flex;
  justify-content: space-between;
  padding: 0 16px;
  border-bottom: 2px solid #dcdcdc;
  font-size: 40px;
  line-height: 63px;
  letter-spacing: -0.6px;
  color: #888;
`;

const Sections = styled.div`
  height: 104px;
  flex: none;
  display: flex;
  padding-left: 28px;
  border-bottom: 2px solid #d8dadc;
`;

const Cards = styled.div`
  height: 226px;
  flex: none;
  display: flex;
  gap: 19px;
  padding: 12px 28px 0 36px;
`;

const Card = styled.div`
  position: relative;
  z-index: 0;
  width: 499px;
  height: 214px;
  flex: none;
  padding: 27px 24px 0;
  overflow: hidden;
  border-radius: 24px 24px 0 0;
  background: linear-gradient(#fff7f5, #fffaf8);
`;

const CardArt = styled.svg`
  position: absolute;
  z-index: -1;
  left: 0;
  top: 0;
`;

const CardTitle = styled.div`
  display: flex;
  align-items: center;
  gap: 13px;
  height: 54px;
  font-size: 41.5px;
  font-weight: 700;
  color: #333;

  span {
    padding-bottom: 4px;
  }
`;

const Chevron = styled.svg`
  margin-left: 1px;
`;

const CardLine = styled.div`
  display: flex;
  align-items: center;
  height: 57px;
  padding-top: 18px;
  font-size: 36px;
  color: #666;

  & + & {
    padding-top: 21px;
  }

  svg {
    margin: 8px 2px 0 2px;
  }
`;

const Strong = styled.b`
  margin: 0 6px 0 1px;
  font-size: 37px;
  color: #d8481e;
`;

const Vote = styled.div`
  display: flex;
  width: 449px;
  height: 101px;
  margin: 21px 0 0 0;
  border: 4px solid #fff;
  border-radius: 51px;
  overflow: hidden;
  background: #fff;
`;

const VoteSide = styled.div<{ $color: string; $bg: string; $right?: boolean }>`
  flex: 1;
  display: flex;
  align-items: center;
  justify-content: ${(p) => (p.$right ? 'flex-end' : 'flex-start')};
  gap: ${(p) => (p.$right ? 18 : 26)}px;
  padding: 0 15px 0 16px;
  background: ${(p) => p.$bg};
  color: ${(p) => p.$color};
  clip-path: ${(p) => (p.$right ? 'polygon(6px 0, 100% 0, 100% 100%, 2px 100%)' : 'polygon(0 0, 100% 0, calc(100% - 4px) 100%, 0 100%)')};
`;

const Knob = styled.div`
  width: 72px;
  height: 72px;
  display: flex;
  align-items: center;
  justify-content: center;
  border-radius: 50%;
  background: #fff;
  box-shadow: 0 0 4px rgba(200, 80, 60, 0.15);
`;

const VoteText = styled.div`
  display: flex;
  flex-direction: column;
  padding-bottom: 4px;
  font-size: 35px;
  line-height: 38px;

  small {
    font-size: 31px;
    line-height: 36px;
  }
`;

const ActionBar = styled.div`
  height: 137px;
  flex: none;
  display: flex;
  border-top: 2px solid #d4d9dd;
  background: #f6f8fa;
`;

const Index = styled.div`
  width: 275px;
  display: flex;
  flex-direction: column;
  align-items: center;
  padding-top: 8px;
`;

const IndexValue = styled.div`
  margin-top: 8px;
  font-size: 41px;
  line-height: 48px;
  letter-spacing: -0.8px;
  color: #0c960c;
`;

const IndexName = styled.div`
  display: flex;
  align-items: center;
  gap: 10px;
  align-self: flex-start;
  padding-left: 9px;
  height: 48px;
  margin-top: 1px;
  font-size: 24.7px;
  color: #666;

  span {
    font-size: 36px;
    letter-spacing: 0.4px;
    color: #0c960c;
  }
`;

const Action = styled.div`
  width: 201.3px;
  display: flex;
  flex-direction: column;
  align-items: center;
  padding-top: 7px;
  font-size: 35.5px;
  line-height: 71px;
  color: #666;
`;

const SystemNav = styled.div`
  flex: 1;
  display: flex;
  justify-content: center;
  align-items: center;
  gap: 185px;
  background: #fbfbfb;
`;
